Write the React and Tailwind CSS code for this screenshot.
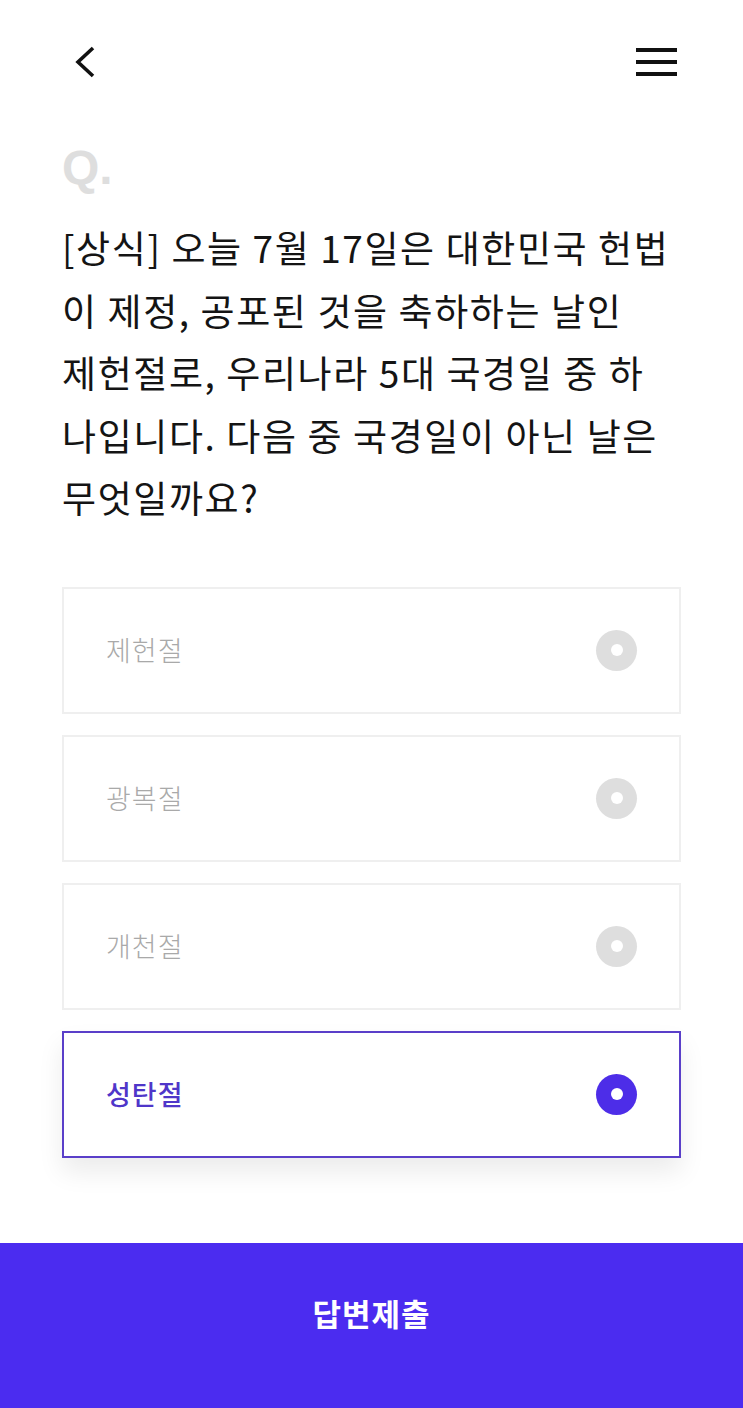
export default function App() {
  const options = [
    { label: "제헌절", selected: false },
    { label: "광복절", selected: false },
    { label: "개천절", selected: false },
    { label: "성탄절", selected: true },
  ];

  const lines = [
    "[상식] 오늘 7월 17일은 대한민국 헌법",
    "이 제정, 공포된 것을 축하하는 날인",
    "제헌절로, 우리나라 5대 국경일 중 하",
    "나입니다. 다음 중 국경일이 아닌 날은",
    "무엇일까요?",
  ];

  return (
    <div className="flex min-h-[1408px] w-full flex-col bg-white font-['Noto_Sans_CJK_KR','Noto_Sans',sans-serif]">
      {/* Header */}
      <div className="flex h-[124px] items-start justify-between pl-[62px] pr-[66px] pt-[46px]">
        <button className="flex h-[32px] w-[40px] items-center justify-start pl-[10px]">
          <svg width="24" height="32" viewBox="0 0 24 32" fill="none">
            <path d="M21 2 L6 16 L21 30" stroke="#111" strokeWidth="3.6" strokeLinecap="butt" strokeLinejoin="miter" />
          </svg>
        </button>
        <button className="flex h-[32px] w-[41px] flex-col justify-between py-[2px]">
          <span className="block h-[4px] w-[41px] bg-[#111]" />
          <span className="block h-[4px] w-[41px] bg-[#111]" />
          <span className="block h-[4px] w-[41px] bg-[#111]" />
        </button>
      </div>

      {/* Question */}
      <div className="px-[62px]">
        <div className="mt-[14px] text-[48px] font-bold leading-[60px] text-[#dedede] font-['Liberation_Sans',sans-serif]">Q.</div>
        <p className="mt-[18px] whitespace-nowrap text-[37px] leading-[62.5px] tracking-[1.6px] text-[#141414]">
          {lines.map((l) => (
            <span key={l} className="block">{l}</span>
          ))}
        </p>
      </div>

      {/* Options */}
      <div className="mt-[58px] flex flex-col gap-[21px] px-[62px]">
        {options.map((o) => (
          <div
            key={o.label}
            className={
              o.selected
                ? "flex h-[127px] items-center justify-between border-2 border-[#5a3fc9] bg-white pl-[42px] pr-[42px] shadow-[0_14px_24px_rgba(0,0,0,0.08)]"
                : "flex h-[127px] items-center justify-between border-2 border-[#efefef] bg-white pl-[42px] pr-[42px]"
            }
          >
            <span className={o.selected ? "text-[27px] font-medium tracking-[1px] text-[#4f36c9]" : "text-[27px] font-light tracking-[1px] text-[#a9a9a9]"}>
              {o.label}
            </span>
            <span
              className={
                o.selected
                  ? "flex h-[41px] w-[41px] items-center justify-center rounded-full bg-[#4d2de8]"
                  : "flex h-[41px] w-[41px] items-center justify-center rounded-full bg-[#dedede]"
              }
            >
              <span className="block h-[12px] w-[12px] rounded-full bg-white" />
            </span>
          </div>
        ))}
      </div>

      <div className="flex-1" />

      {/* Submit */}
      <button className="flex h-[165px] w-full items-center justify-center bg-[#4b2cf0] pb-[24px] text-[31px] font-bold tracking-[1px] text-white">
        답변제출
      </button>
    </div>
  );
}
